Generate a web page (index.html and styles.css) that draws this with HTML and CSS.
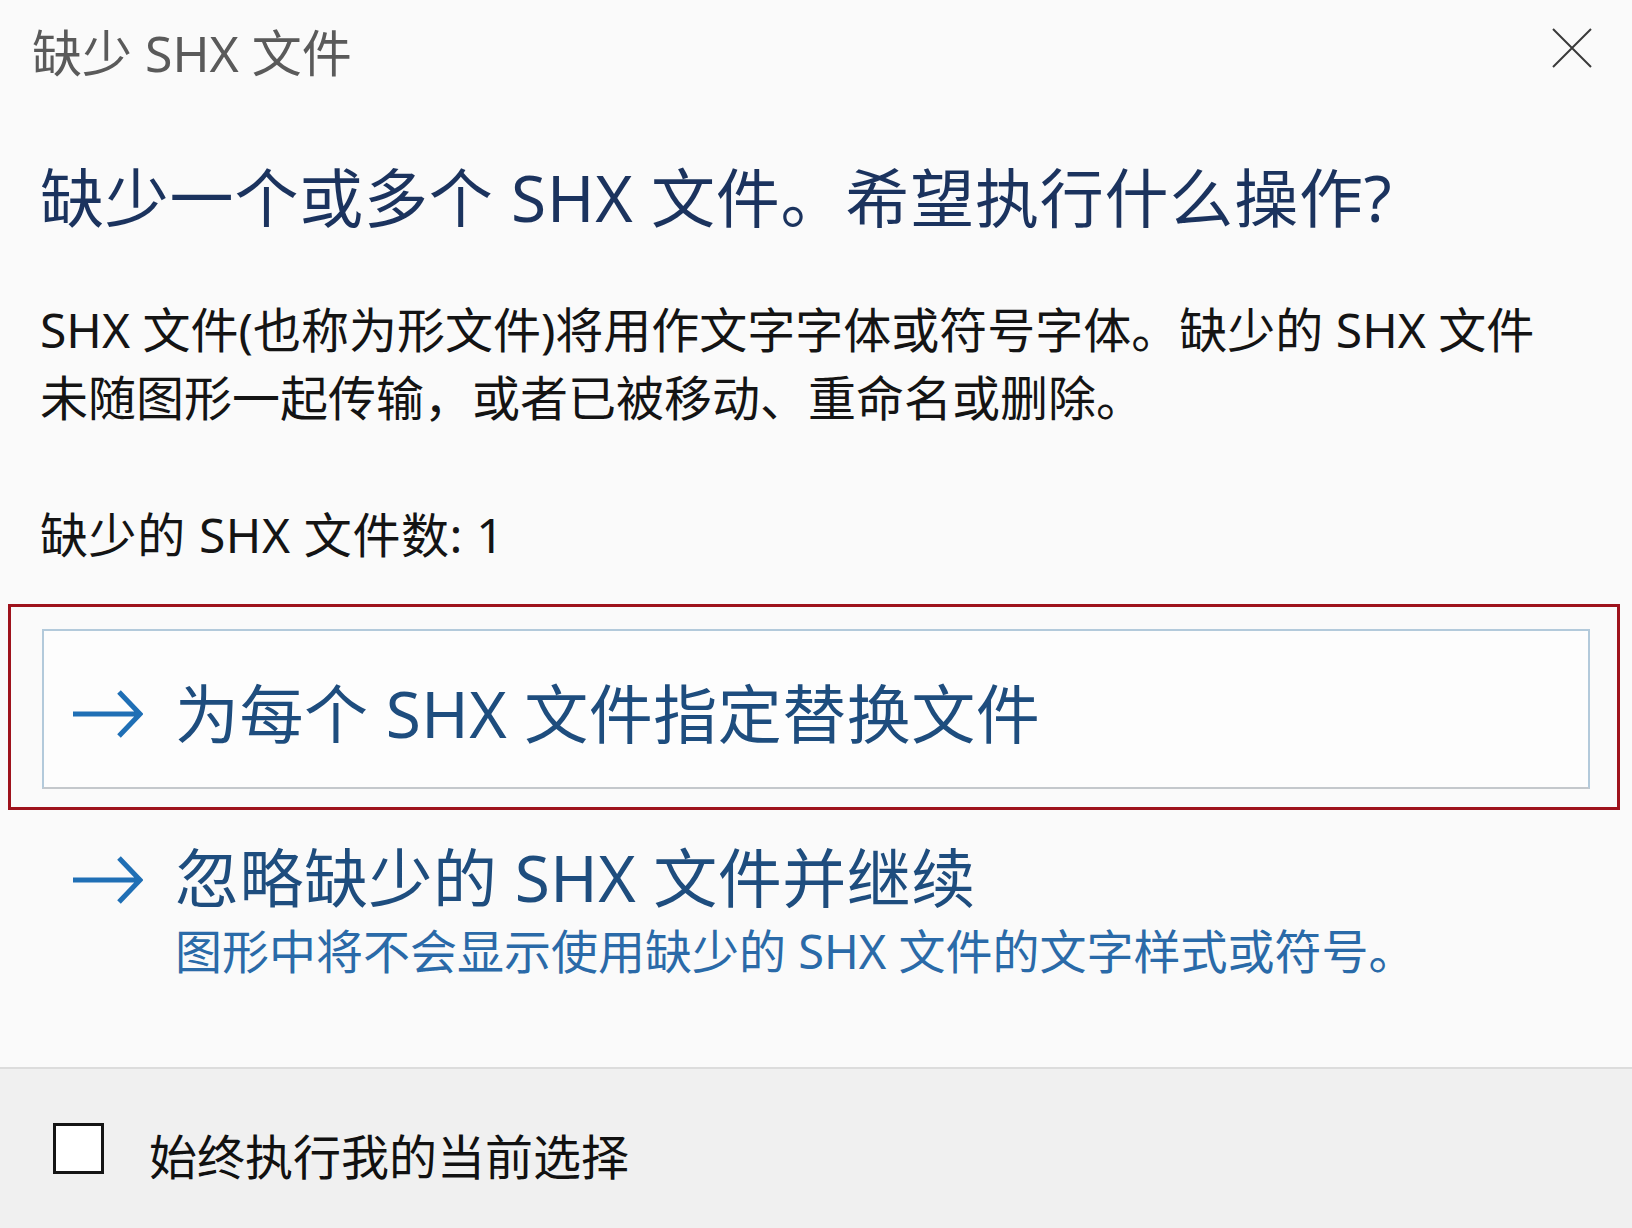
FILE: index.html
```html
<!DOCTYPE html>
<html lang="zh-CN">
<head>
    <meta charset="UTF-8">
    <title>缺少 SHX 文件</title>
    <link rel="stylesheet" href="styles.css">
</head>
<body>
    <div class="dialog">
        <div class="titlebar">
            <span class="title">缺少 SHX 文件</span>
            <svg class="close" width="40" height="40" viewBox="0 0 40 40">
                <path d="M1 1 L39 39 M39 1 L1 39" stroke="#3a3a3a" stroke-width="2" fill="none"/>
            </svg>
        </div>
        <div class="main">
            <h1 class="heading">缺少一个或多个 SHX 文件。希望执行什么操作?</h1>
            <p class="desc">SHX 文件(也称为形文件)将用作文字字体或符号字体。缺少的 SHX 文件<br>未随图形一起传输，或者已被移动、重命名或删除。</p>
            <div class="count">缺少的 SHX 文件数: 1</div>

            <div class="mark">
                <div class="option selected">
                    <svg class="arrow" width="72" height="52" viewBox="0 0 72 52">
                        <path d="M2 26 L68 26 M48 4 L69 26 L48 48" stroke="#1f6fb5" stroke-width="5" fill="none"/>
                    </svg>
                    <div class="option-text">
                        <div class="option-title">为每个 SHX 文件指定替换文件</div>
                    </div>
                </div>
            </div>

            <div class="option plain">
                <svg class="arrow" width="72" height="52" viewBox="0 0 72 52">
                    <path d="M2 26 L68 26 M48 4 L69 26 L48 48" stroke="#1f6fb5" stroke-width="5" fill="none"/>
                </svg>
                <div class="option-text">
                    <div class="option-title">忽略缺少的 SHX 文件并继续</div>
                    <div class="option-sub">图形中将不会显示使用缺少的 SHX 文件的文字样式或符号。</div>
                </div>
            </div>
        </div>
        <div class="footer">
            <span class="checkbox"></span>
            <span class="footer-label">始终执行我的当前选择</span>
        </div>
    </div>
</body>
</html>
```

FILE: styles.css
```css
*{
    margin: 0;
    padding: 0;
    box-sizing: border-box;
}
body{
    background: #fafafa;
    font-family: "Noto Sans", "Noto Sans CJK SC", sans-serif;
    color: #141414;
}
.dialog{
    width: 1632px;
    height: 1228px;
    display: flex;
    flex-direction: column;
    overflow: hidden;
}
.titlebar{
    height: 100px;
    display: flex;
    align-items: center;
    justify-content: space-between;
    padding: 0 40px 0 32px;
}
.title{
    font-size: 50px;
    color: #5a5a5a;
}
.close{
    margin-top: -4px;
}
.main{
    flex: 1;
}
.heading{
    margin: 58px 40px 0;
    font-size: 64px;
    line-height: 80px;
    font-weight: normal;
    letter-spacing: 0.8px;
    color: #1b335e;
}
.desc{
    margin: 58px 40px 0;
    font-size: 48px;
    line-height: 68px;
}
.count{
    margin: 69px 40px 0;
    font-size: 48px;
    line-height: 68px;
    letter-spacing: 0.6px;
}
.mark{
    margin: 35px 12px 0 8px;
    border: 3px solid #9e121c;
    padding: 22px 27px 18px 31px;
}
.option{
    display: flex;
    align-items: flex-start;
}
.option.selected{
    height: 160px;
    align-items: center;
    border: 2px solid #b3cadb;
    border-bottom-color: #c4c8cc;
    background: #fdfdfd;
    padding: 10px 0 0 27px;
}
.option.plain{
    margin-top: 28px;
    padding-left: 71px;
}
.arrow{
    flex: none;
}
.option.plain .arrow{
    margin-top: 16px;
}
.option-text{
    margin-left: 32px;
}
.option-title{
    font-size: 64px;
    line-height: 80px;
    letter-spacing: 0.5px;
    color: #1e4d7e;
}
.option-sub{
    font-size: 47px;
    line-height: 66px;
    color: #2a6aa8;
}
.footer{
    height: 161px;
    flex: none;
    background: #f0f0f0;
    border-top: 2px solid #dcdcdc;
    display: flex;
    align-items: center;
    padding: 10px 0 0 53px;
}
.checkbox{
    width: 51px;
    height: 51px;
    border: 3px solid #151515;
    background: #fff;
    margin-top: -10px;
}
.footer-label{
    margin-left: 45px;
    font-size: 48px;
    color: #111;
}
```
